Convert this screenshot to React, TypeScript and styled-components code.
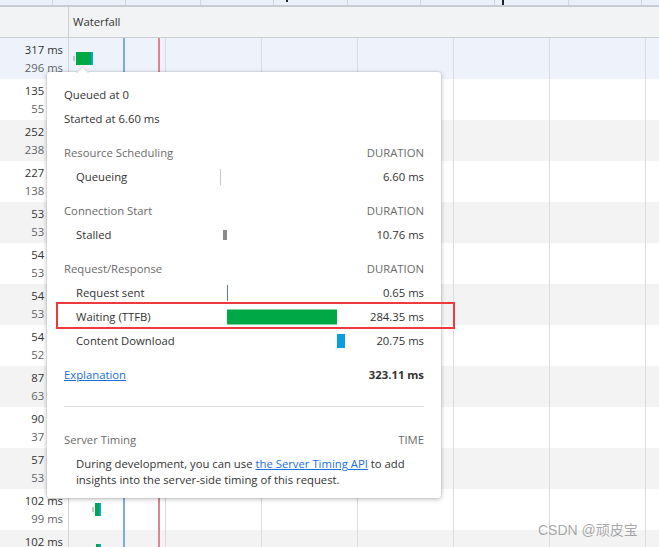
import React from "react";
import styled, { createGlobalStyle } from "styled-components";

const FONT = `"Open Sans", "Noto Sans", "Liberation Sans", sans-serif`;

const GlobalStyle = createGlobalStyle`
  html, body {
    margin: 0;
    padding: 0;
    background: #fff;
  }
  body {
    font-family: ${FONT};
    font-size: 11.3px;
    color: #333;
  }
`;

// --- PAGE FRAME ---
const Page = styled.div`
  position: relative;
  width: 659px;
  height: 547px;
  overflow: hidden;
  background: #fff;
`;

// --- OVERVIEW STRIP ---
const Overview = styled.div`
  position: relative;
  height: 5px;
  background: #eaf0f9;
  border-bottom: 2px solid #c9cbd0;
`;

const Tick = styled.span<{ $dark?: boolean; $h?: number }>`
  position: absolute;
  top: 0;
  width: ${(p) => (p.$dark ? 2 : 1)}px;
  height: ${(p) => p.$h ?? 5}px;
  background: ${(p) => (p.$dark ? "#1b2430" : "#cfd6e0")};
`;

// --- HEADER ---
const Header = styled.div`
  display: grid;
  grid-template-columns: 69px 1fr;
  height: 30px;
  background: #f1f3f4;
  border-bottom: 1px solid #cbcdd1;
`;

const HeaderCell = styled.div`
  border-right: 1px solid #cbcdd1;
`;

const HeaderTitle = styled.div`
  padding-left: 4px;
  line-height: 30px;
  color: #333;
`;

// --- ROWS ---
const Body = styled.div`
  position: relative;
`;

const Row = styled.div<{ $tone: "selected" | "white" | "gray" }>`
  display: grid;
  grid-template-columns: 69px 1fr;
  height: 41px;
  background: ${(p) =>
    p.$tone === "selected" ? "#eef3fb" : p.$tone === "gray" ? "#f3f3f3" : "#fff"};
`;

const TimeCell = styled.div`
  display: flex;
  flex-direction: column;
  align-items: flex-end;
  padding: 3px 5px 0 0;
  border-right: 1px solid #d3d3d3;
  line-height: 18px;
  white-space: nowrap;
`;

const TimeTop = styled.span`
  color: #333;
`;

const TimeBottom = styled.span`
  color: #5f6368;
`;

const WfCell = styled.div`
  position: relative;
`;

const Seg = styled.span<{ $kind: "queue" | "wait" | "down" }>`
  position: absolute;
  top: ${(p) => (p.$kind === "queue" ? 18 : 14)}px;
  height: ${(p) => (p.$kind === "queue" ? 5 : 13)}px;
  background: ${(p) =>
    p.$kind === "queue" ? "#c8c8c8" : p.$kind === "wait" ? "#00a846" : "#0c9fe3"};
`;

const Lines = styled.div`
  position: absolute;
  inset: 0;
  pointer-events: none;
`;

const VLine = styled.span<{ $color: string; $w?: number }>`
  position: absolute;
  top: 0;
  bottom: 0;
  width: ${(p) => p.$w ?? 1}px;
  background: ${(p) => p.$color};
`;

// --- POPUP ---
const Popup = styled.div`
  position: absolute;
  left: 47px;
  top: 72px;
  width: 394px;
  box-sizing: border-box;
  padding: 11px 17px 10px;
  background: #fff;
  border-radius: 3px;
  box-shadow: 0 1px 5px rgba(0, 0, 0, 0.28), 0 0 0 1px rgba(0, 0, 0, 0.04);
  color: #333;
  z-index: 5;
`;

const Arrow = styled.span`
  position: absolute;
  left: 31px;
  top: -4px;
  width: 8px;
  height: 8px;
  background: #fff;
  transform: rotate(45deg);
  border-top: 1px solid rgba(0, 0, 0, 0.14);
  border-left: 1px solid rgba(0, 0, 0, 0.14);
`;

const InfoLine = styled.div`
  line-height: 24px;
`;

const Section = styled.div`
  margin-top: 10px;
`;

const SectionHead = styled.div`
  display: flex;
  justify-content: space-between;
  line-height: 24px;
  color: #6b6b6b;
`;

const TimingRow = styled.div`
  display: grid;
  grid-template-columns: 144px 125px 1fr;
  padding-left: 12px;
  height: 24px;
  line-height: 24px;
`;

const Track = styled.div`
  position: relative;
`;

const Bar = styled.span<{ $kind: string }>`
  position: absolute;
  top: 50%;
  transform: translateY(-50%);
  height: ${(p) =>
    p.$kind === "queueing" || p.$kind === "sent"
      ? 16
      : p.$kind === "stalled"
      ? 10
      : p.$kind === "waiting"
      ? 15
      : 14}px;
  min-width: 1px;
  box-sizing: border-box;
  background: ${(p) =>
    p.$kind === "queueing"
      ? "transparent"
      : p.$kind === "stalled"
      ? "#8a8a8a"
      : p.$kind === "sent"
      ? "#5d7c8c"
      : p.$kind === "waiting"
      ? "#00a846"
      : "#0a9de0"};
  border-left: ${(p) => (p.$kind === "queueing" ? "1px solid #c9c9c9" : "none")};
`;

const Value = styled.span`
  text-align: right;
`;

const TotalRow = styled.div`
  display: flex;
  justify-content: space-between;
  line-height: 24px;
  margin-top: 10px;
`;

const Link = styled.a`
  color: #1a6fe0;
  text-decoration: underline;
  cursor: pointer;
`;

const Total = styled.span`
  font-weight: 700;
  color: #333;
`;

const Divider = styled.hr`
  margin: 19px 0 21px;
  border: 0;
  border-top: 1px solid #dcdcdc;
  height: 0;
`;

const ServerText = styled.p`
  margin: 4px 0 0;
  padding-left: 12px;
  line-height: 16px;
`;

// --- ANNOTATIONS ---
const Highlight = styled.div`
  position: absolute;
  left: 56px;
  top: 302px;
  width: 399px;
  height: 27px;
  box-sizing: border-box;
  border: 2px solid #ef3a3d;
  z-index: 6;
`;

const Watermark = styled.div`
  position: absolute;
  left: 538px;
  top: 519px;
  font-family: "Liberation Sans", "Noto Sans CJK SC", sans-serif;
  font-size: 14px;
  color: rgba(110, 110, 110, 0.6);
  z-index: 7;
`;

const rows = [
  ["317 ms", "296 ms"],
  ["135 ms", "55 ms"],
  ["252 ms", "238 ms"],
  ["227 ms", "138 ms"],
  ["53 ms", "53 ms"],
  ["54 ms", "53 ms"],
  ["54 ms", "53 ms"],
  ["54 ms", "52 ms"],
  ["87 ms", "63 ms"],
  ["90 ms", "37 ms"],
  ["57 ms", "53 ms"],
  ["102 ms", "99 ms"],
  ["102 ms", "99 ms"],
];

type Piece = { kind: "queue" | "wait" | "down"; left: number; width: number };

const rowBars: Record<number, Piece[]> = {
  0: [
    { kind: "queue", left: 4, width: 2 },
    { kind: "wait", left: 7, width: 15 },
    { kind: "down", left: 22, width: 2 },
  ],
  11: [
    { kind: "queue", left: 23, width: 2 },
    { kind: "wait", left: 26, width: 4 },
    { kind: "down", left: 30, width: 2 },
  ],
  12: [
    { kind: "wait", left: 27, width: 3 },
    { kind: "down", left: 30, width: 2 },
  ],
};

const TOTAL = 323.11;
const TRACK = 125;

const phases = [
  {
    title: "Resource Scheduling",
    items: [{ kind: "queueing", label: "Queueing", start: 0, dur: 6.6, text: "6.60 ms" }],
  },
  {
    title: "Connection Start",
    items: [{ kind: "stalled", label: "Stalled", start: 6.6, dur: 10.76, text: "10.76 ms" }],
  },
  {
    title: "Request/Response",
    items: [
      { kind: "sent", label: "Request sent", start: 17.36, dur: 0.65, text: "0.65 ms" },
      { kind: "waiting", label: "Waiting (TTFB)", start: 18.01, dur: 284.35, text: "284.35 ms" },
      { kind: "download", label: "Content Download", start: 302.36, dur: 20.75, text: "20.75 ms" },
    ],
  },
];

const overviewTicks = [52, 125, 200, 273, 347, 420, 494, 568, 641];
const gridLines = [165, 261, 357, 453, 549, 645];

export default function App() {
  return (
    <Page>
      <GlobalStyle />
      <Overview>
        {overviewTicks.map((x) => (
          <Tick key={x} style={{ left: x }} />
        ))}
        <Tick $dark $h={2} style={{ left: 286 }} />
        <Tick $dark $h={5} style={{ left: 502 }} />
      </Overview>

      <Header>
        <HeaderCell />
        <HeaderTitle>Waterfall</HeaderTitle>
      </Header>

      <Body>
        {rows.map(([a, b], i) => (
          <Row key={i} $tone={i === 0 ? "selected" : i % 2 === 0 ? "gray" : "white"}>
            <TimeCell>
              <TimeTop>{a}</TimeTop>
              <TimeBottom>{b}</TimeBottom>
            </TimeCell>
            <WfCell>
              {(rowBars[i] || []).map((s, j) => (
                <Seg key={j} $kind={s.kind} style={{ left: s.left, width: s.width }} />
              ))}
            </WfCell>
          </Row>
        ))}
        <Lines>
          <VLine $color="#7eaadf" $w={2} style={{ left: 123 }} />
          <VLine $color="#d7878d" $w={2} style={{ left: 158 }} />
          {gridLines.map((x) => (
            <VLine key={x} $color="#dcdcdc" style={{ left: x }} />
          ))}
        </Lines>
      </Body>

      <Popup>
        <Arrow />
        <InfoLine>Queued at 0</InfoLine>
        <InfoLine>Started at 6.60 ms</InfoLine>

        {phases.map((ph) => (
          <Section key={ph.title}>
            <SectionHead>
              <span>{ph.title}</span>
              <span>DURATION</span>
            </SectionHead>
            {ph.items.map((it) => (
              <TimingRow key={it.label}>
                <span>{it.label}</span>
                <Track>
                  <Bar
                    $kind={it.kind}
                    style={{
                      left: (it.start / TOTAL) * TRACK,
                      width: Math.max(1, (it.dur / TOTAL) * TRACK),
                    }}
                  />
                </Track>
                <Value>{it.text}</Value>
              </TimingRow>
            ))}
          </Section>
        ))}

        <TotalRow>
          <Link>Explanation</Link>
          <Total>323.11 ms</Total>
        </TotalRow>

        <Divider />

        <SectionHead>
          <span>Server Timing</span>
          <span>TIME</span>
        </SectionHead>
        <ServerText>
          During development, you can use <Link>the Server Timing API</Link> to add
          insights into the server-side timing of this request.
        </ServerText>
      </Popup>

      <Highlight />
      <Watermark>CSDN @顽皮宝</Watermark>
    </Page>
  );
}
